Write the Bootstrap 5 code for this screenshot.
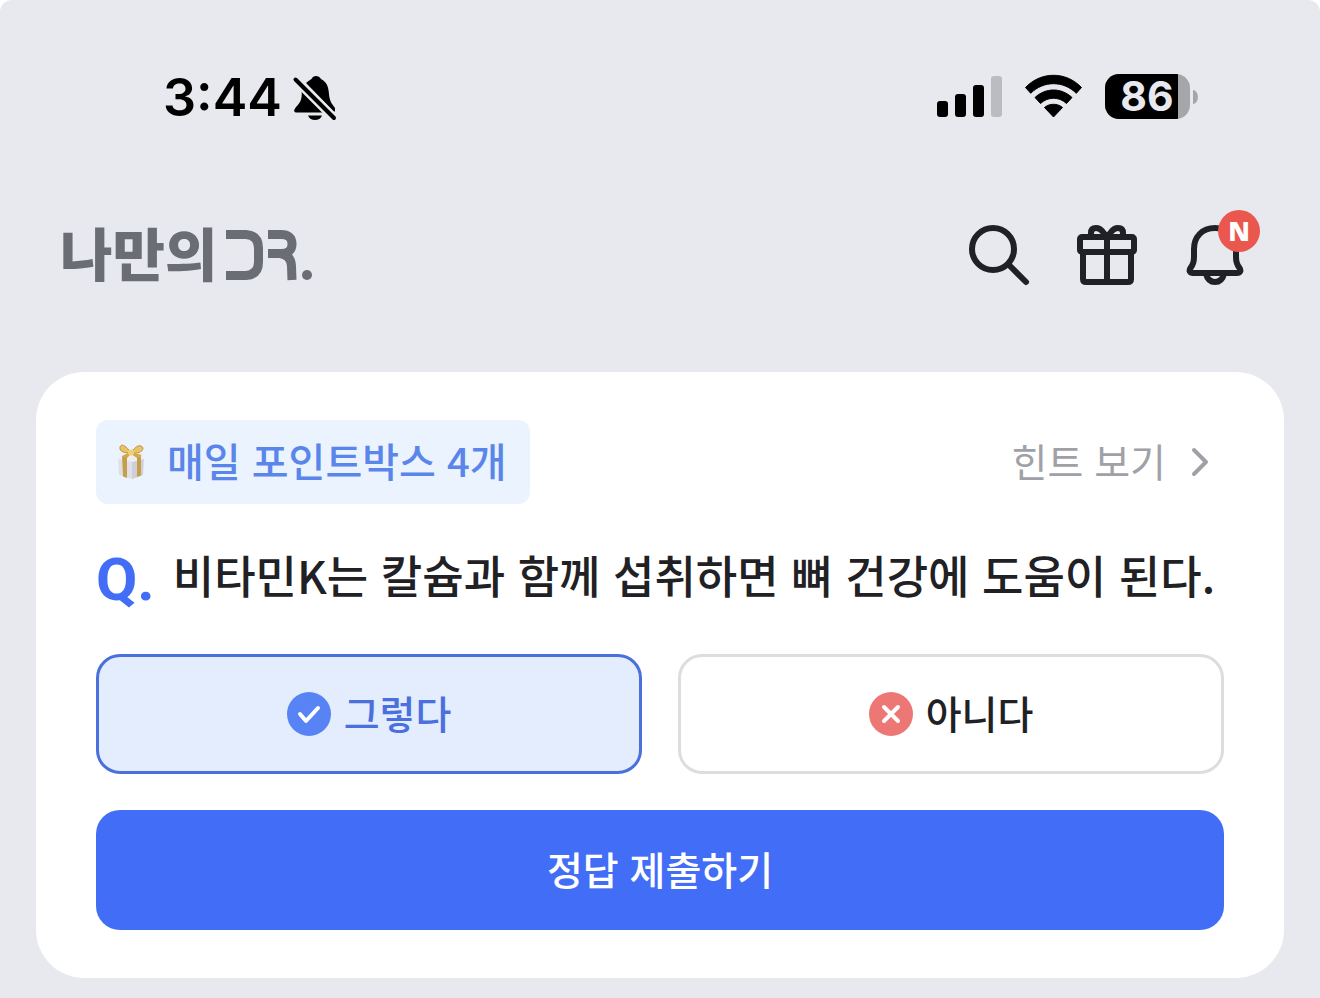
<!DOCTYPE html>
<html lang="ko">
<head>
<meta charset="utf-8">
<meta name="viewport" content="width=device-width, initial-scale=1">
<title>나만의 DR.</title>
<link href="https://cdn.jsdelivr.net/npm/bootstrap@5.3.0/dist/css/bootstrap.min.css" rel="stylesheet">
<style>
  :root { --ink: #1f2125; --brand: #426df6; --page: #e8e9ee; }
  html { background: #fff; }
  body { background: #fff; color: var(--ink); font-family: "Noto Sans CJK KR", sans-serif; font-size: 39px; line-height: 60px; font-weight: 500; }
  svg { display: block; flex-shrink: 0; overflow: visible; }
  .screen { background: var(--page); border-radius: 12px 12px 0 0; padding: 64px 36px 20px; min-height: 100vh; }
  .status { color: #000; padding: 0 86px 0 127px; height: 68px; font-family: Inter, sans-serif; }
  .clock-group { gap: 11px; }
  .clock { font-size: 52px; font-weight: 600; }
  .level { font: 700 41px Inter, sans-serif; fill: var(--page); }
  .status-icons { gap: 23px; padding-bottom: 4px; }
  .app-bar { padding: 93px 39px 87px 25px; }
  .logo { color: #6b6d74; text-decoration: none; }
  .logo text { font: 900 57px "Noto Sans CJK KR", sans-serif; fill: currentColor; }
  .actions { gap: 48px; }
  .icon-btn { border: 0; background: none; padding: 0; color: var(--ink); position: relative; }
  .new-dot { position: absolute; top: -15px; right: -15px; width: 42px; height: 42px; background: #e9574f; color: #fff; font: 800 26px/42px "Open Sans", sans-serif; }
  .quiz { border: 0; border-radius: 48px; padding: 48px 60px; }
  .caption-text { padding-bottom: 4px; }
  .chip { background: #eaf3fe; color: #5a86ea; border-radius: 12px; height: 84px; padding: 0 23px 0 20px; gap: 21px; font-size: 40px; }
  .hint { color: #a0a1a7; text-decoration: none; gap: 24px; padding-right: 14px; font-weight: 400; }
  .question { gap: 18px; margin: 41px 0 49px; font-size: 45px; line-height: 60px; font-weight: 500; }
  .question-mark { color: var(--brand); font: 700 60px/70px Roboto, sans-serif; margin-bottom: -10px; }
  .choices { gap: 36px; border: 0; margin: 0 0 36px; padding: 0; }
  .choice, .submit { height: 120px; border-radius: 24px; font-size: 39px; line-height: 60px; font-weight: 500; }
  .choice { flex: 1 1 0; gap: 13px; border: 3px solid #dcdddf; background: #fff; color: var(--ink); }
  .choice:hover { border-color: #b9c6ee; }
  .btn-check:checked + .choice { background: #e4edfd; border-color: #4a70dd; color: #4a70dd; }
  .submit, .submit:hover { background: var(--brand); color: #fff; border: 0; }
</style>
</head>
<body>
<div class="screen">
  <div class="status d-flex justify-content-between align-items-center">
    <div class="clock-group d-flex align-items-center">
      <span class="clock">3:44</span>
      <svg width="44" height="46" viewBox="0 0 44 46" role="img" aria-label="무음">
        <path d="M8 12 C10 23 8 27 3 32 C0 36 1 37.500 4 37.500 H32 Z M13 8 C15 6 17 5 18.500 4 C20 0 26 0 28 4 C34 7 35.500 12 36 19 C36.500 26 39 29 42 33 V36 L41 37 Z M15 40.500 H29 C27 46.500 17 46.500 15 40.500Z" fill="#000"/>
        <path d="M3 5 L41 43" stroke="#e8e9ee" stroke-width="9"/>
        <path d="M2.500 4.500 L41 43" stroke="#000" stroke-width="4" stroke-linecap="round"/>
      </svg>
    </div>
    <div class="status-icons d-flex align-items-center">
      <svg width="65" height="42" viewBox="0 0 65 42" role="img" aria-label="신호">
        <rect y="26" width="11" height="16" rx="3"/><rect x="18" y="19" width="11" height="23" rx="3"/><rect x="36" y="10" width="11" height="32" rx="3"/><rect x="54" y="1" width="11" height="41" rx="3" fill="#bbbcc0"/>
      </svg>
      <svg width="57" height="43" viewBox="0 0 57 43" role="img" aria-label="Wi-Fi">
        <path d="M0.500 12.500 C16 -3.800 41 -3.800 56.500 12.500 L51.300 18.300 C38.500 5.500 18.500 5.500 5.700 18.300 Z M10 22.500 C20.500 12.500 36.500 12.500 47 22.500 L41.500 28.500 C34 21.500 23 21.500 15.500 28.500 Z M19.500 32.500 C24.500 28.200 32.500 28.200 37.500 32.500 L28.500 42 Z" stroke="#000" stroke-width="1" stroke-linejoin="round"/>
      </svg>
      <svg width="93" height="45" viewBox="0 0 93 45" role="img" aria-label="배터리 86">
        <defs><clipPath id="cell"><rect width="85" height="45" rx="14"/></clipPath></defs>
        <g clip-path="url(#cell)"><rect width="85" height="45" fill="#a5a6a9"/><rect width="73" height="45"/></g>
        <path d="M88 16 C94.500 17 94.500 29 88 30Z" fill="#a5a6a9"/>
        <text class="level" x="42" y="37" text-anchor="middle">86</text>
      </svg>
    </div>
  </div>

  <header class="app-bar d-flex justify-content-between align-items-center">
    <a class="logo" href="#" aria-label="나만의 DR.">
      <svg width="256" height="60" viewBox="0 0 256 60">
        <text x="-1" y="51">나만의</text>
        <g fill="none" stroke="currentColor" stroke-width="9">
          <path d="M165 9.500 H185 Q197.500 10.500 197.500 23 V37 Q197.500 49.500 185 50.500 H165"/>
          <path d="M207 9.500 H220 Q231 9.500 231 19 Q231 28.500 220 28.500 H207 M219 28.500 Q230 30 230.500 41 L231 55"/>
        </g>
        <circle cx="246" cy="50" r="5" fill="currentColor"/>
      </svg>
    </a>
    <nav class="actions d-flex" aria-label="메뉴">
      <button type="button" class="icon-btn" aria-label="검색">
        <svg width="60" height="60" viewBox="0 0 60 60" fill="none" stroke="currentColor" stroke-width="6" stroke-linecap="round"><circle cx="24" cy="24" r="21"/><path d="M39.500 39.500 L57 57"/></svg>
      </button>
      <button type="button" class="icon-btn" aria-label="선물">
        <svg width="60" height="60" viewBox="0 0 60 60" fill="none" stroke="currentColor" stroke-width="6" stroke-linejoin="round"><rect x="3" y="12" width="54" height="15" rx="2"/><path d="M6 27 V54 Q6 57 9 57 H51 Q54 57 54 54 V27 M30 12 V57"/><path d="M14 12 V8 Q14 3 19 3 Q23 3 26 7 L30 12 L34 7 Q37 3 41 3 Q46 3 46 8 V12"/></svg>
      </button>
      <button type="button" class="icon-btn" aria-label="새 알림">
        <svg width="60" height="60" viewBox="0 0 60 60" fill="none" stroke="currentColor" stroke-width="6" stroke-linejoin="round"><path d="M30 3 C17 3 9 12 9 24 V32 C9 38 8 40 5.500 43 C3.500 46 5 48 8 48 H52 C55 48 56.500 46 54.500 43 C52 40 51 38 51 32 V24 C51 12 43 3 30 3Z"/><path d="M21 49 Q23 57 30 57 Q37 57 39 49"/></svg>
        <span class="new-dot rounded-circle text-center">N</span>
      </button>
    </nav>
  </header>

  <main class="card quiz">
    <div class="d-flex justify-content-between align-items-center">
      <div class="chip d-flex align-items-center">
        <svg width="30" height="36" viewBox="0 0 30 36" aria-hidden="true">
          <path d="M2 12 L16 15 V35 L3 31Z" fill="#e0dfe8"/><path d="M16 15 L28 12 L27 31 L16 35Z" fill="#d0cedb"/>
          <path d="M2 11 L15 8 L28 11 V15 L16 18 L2 15Z" fill="#f0eef3"/>
          <path d="M6 12 L11 13 V34 L7 32.500Z M21 13 L25 12 V31.500 L21 33Z" fill="#c5a04a"/>
          <path d="M15 9 C9 0 5 0 4 3 C3 8 9 9 15 9 C21 10 27 8 27 4 C25 0 20 1 15 9Z" fill="#e7c467" stroke="#bd943c" stroke-width="1"/>
          <path d="M14 8 L6 12 L11 14 L15 10 L21 14 L26 11Z" fill="#d3a947"/><circle cx="15" cy="8.500" r="3" fill="#efd078"/>
        </svg>
        <span class="caption-text">매일 포인트박스 4개</span>
      </div>
      <a href="#" class="hint d-flex align-items-center"><span class="caption-text">힌트 보기</span>
        <svg width="20" height="30" viewBox="0 0 20 30" fill="none" stroke="currentColor" stroke-width="4" stroke-linecap="round" stroke-linejoin="round"><path d="M4 3 L16 15 L4 27"/></svg>
      </a>
    </div>
    <h1 class="question d-flex text-nowrap"><span class="question-mark">Q.</span><span>비타민K는 칼슘과 함께 섭취하면 뼈 건강에 도움이 된다.</span></h1>
    <form>
      <fieldset class="choices d-flex" aria-label="답 고르기">
        <input class="btn-check" type="radio" name="answer" id="yes" checked>
        <label class="btn choice d-flex align-items-center justify-content-center" for="yes">
          <svg width="44" height="44" viewBox="0 0 44 44"><circle cx="22" cy="22" r="22" fill="#5783f5"/><path d="M13 22 L19 29 L31 16" fill="none" stroke="#fff" stroke-width="4" stroke-linecap="round" stroke-linejoin="round"/></svg>
          <span class="caption-text">그렇다</span>
        </label>
        <input class="btn-check" type="radio" name="answer" id="no">
        <label class="btn choice d-flex align-items-center justify-content-center" for="no">
          <svg width="44" height="44" viewBox="0 0 44 44"><circle cx="22" cy="22" r="22" fill="#ec7774"/><path d="M15 15 L29 29 M29 15 L15 29" stroke="#fff" stroke-width="4" stroke-linecap="round"/></svg>
          <span class="caption-text">아니다</span>
        </label>
      </fieldset>
      <button type="button" class="btn submit w-100 d-flex align-items-center justify-content-center"><span class="caption-text">정답 제출하기</span></button>
    </form>
  </main>
</div>
<script src="https://cdn.jsdelivr.net/npm/bootstrap@5.3.0/dist/js/bootstrap.bundle.min.js"></script>
</body>
</html>
